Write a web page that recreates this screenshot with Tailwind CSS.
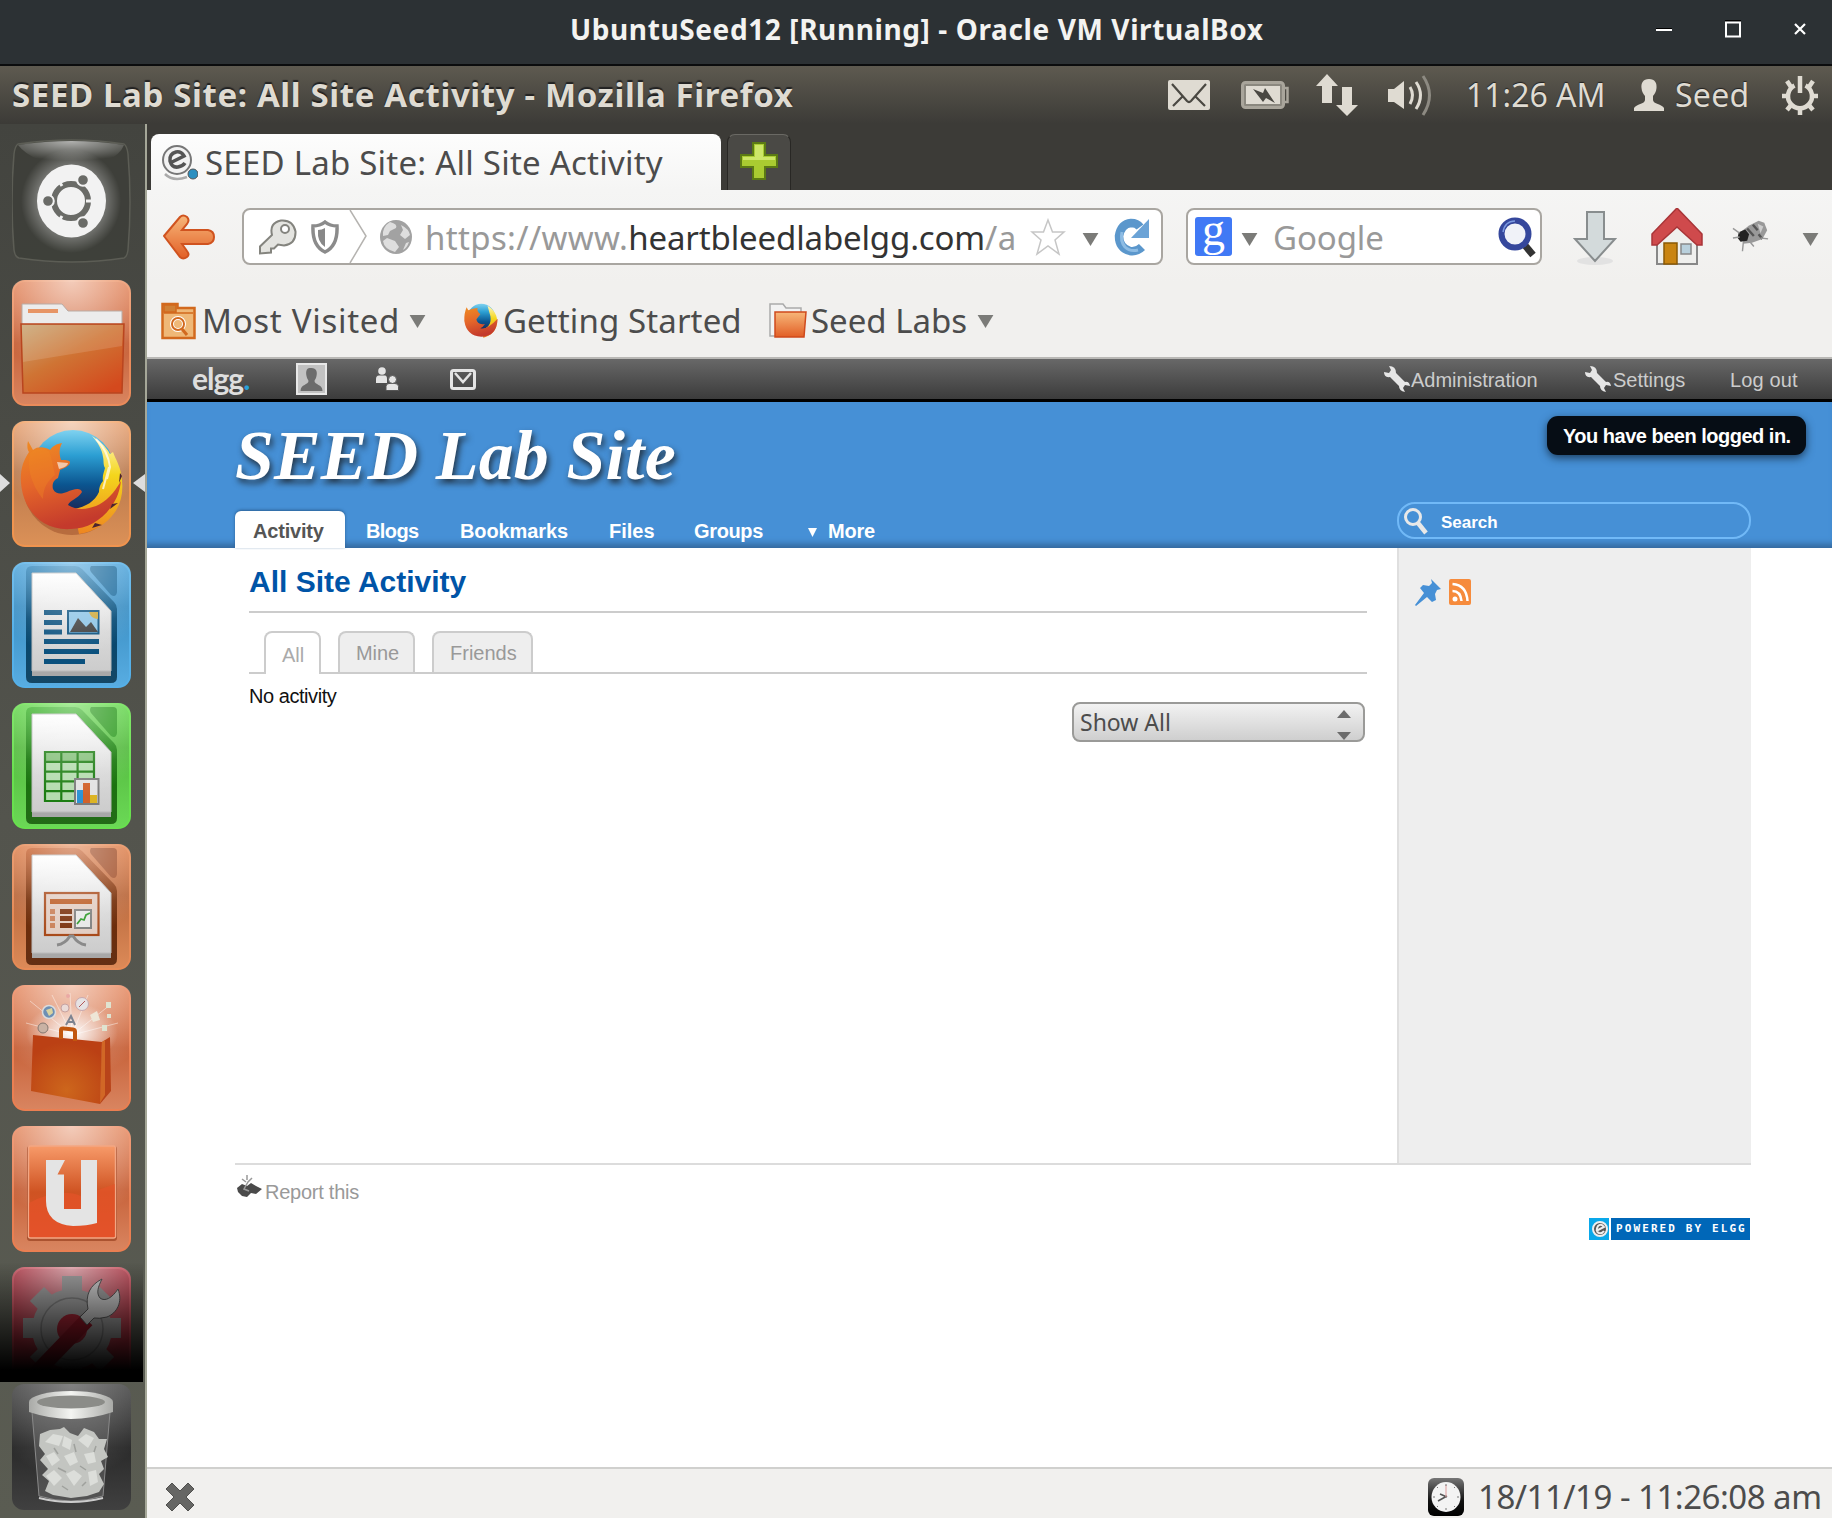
<!DOCTYPE html>
<html lang="en">
<head>
<meta charset="utf-8">
<title>SEED Lab Site: All Site Activity</title>
<script src="https://cdn.jsdelivr.net/npm/@tailwindcss/browser@4"></script>
</head>
<body class="w-[1832px] h-[1518px] overflow-hidden flex flex-col bg-white font-['Noto_Sans',sans-serif] whitespace-nowrap">

<!-- VirtualBox window title -->
<header class="h-[66px] shrink-0 bg-[#2c3134] border-b-2 border-[#0b0c0d] flex relative">
  <h1 class="ml-[570px] h-[58px] leading-[58px] text-[28px] font-bold text-[#f3f3f1] tracking-[0.6px]">UbuntuSeed12 [Running] - Oracle VM VirtualBox</h1>
  <div class="ml-auto h-[58px] flex items-center pr-[26px] gap-[53px]">
    <svg class="w-4 h-[18px]" viewBox="0 0 16 18"><path d="M0 8h16v1H0z" fill="#000"/><path d="M0 9h16v2H0z" fill="#fff"/></svg>
    <svg class="w-4 h-[18px]" viewBox="0 0 16 18"><path d="M0 0h16v1.500H0z" fill="#000"/><path d="M1 2.500h14v14H1z" fill="none" stroke="#fff" stroke-width="2"/></svg>
    <svg class="w-3 h-3" viewBox="0 0 12 12"><path d="M1 1l10 10M11 1L1 11" stroke="#fff" stroke-width="2.200"/></svg>
  </div>
</header>

<!-- Unity top panel -->
<div class="h-[58px] shrink-0 bg-linear-to-b from-[#5e5a50] to-[#3c3b37] flex items-center text-[#dfdbd2]">
  <div class="pl-3 text-[33px] font-bold tracking-[0.63px] [text-shadow:0_-2px_1px_#222]">SEED Lab Site: All Site Activity - Mozilla Firefox</div>
  <div class="ml-auto h-full flex items-center text-[32px] [text-shadow:0_-1px_1px_#222]">
    <svg class="w-[42px] h-[30px] mr-[31px]" viewBox="0 0 42 30"><rect width="42" height="30" rx="2" fill="#dfdbd2"/><path d="M4 4l15 17q2 2 4 0L38 4M5 26l10-10M37 26L27 16" fill="none" stroke="#4a4842" stroke-width="2.200"/></svg>
    <svg class="w-[48px] h-[28px] mr-[27px]" viewBox="0 0 48 28"><rect x="1.500" y="1.500" width="41" height="25" rx="3" fill="#8b887f" stroke="#a9a59b" stroke-width="3"/><path d="M43 7h3.500v14H43" fill="none" stroke="#a9a59b" stroke-width="2.500"/><rect x="5" y="5" width="34" height="18" fill="#dfdbd2"/><path d="M12 8l10 4 2-5 10 15-9-5-3 4z" fill="#4a4842"/></svg>
    <svg class="w-[42px] h-[42px] mr-[30px]" viewBox="0 0 42 42"><path d="M11 0l11 12h-6v17H6V12H0z" fill="#dfdbd2"/><path d="M31 42L20 31h6V13h10v18h6z" fill="#dfdbd2"/></svg>
    <svg class="w-[48px] h-[42px] mr-[30px]" viewBox="0 0 48 42"><path d="M0 15h6l10-8v28L6 28H0z" fill="#dfdbd2"/><path d="M22 13q5 8 0 17M28 8q9 13 0 27" fill="none" stroke="#dfdbd2" stroke-width="3"/><path d="M35 2q13 19 0 39" fill="none" stroke="#8d8a82" stroke-width="3"/></svg>
    <span class="w-[139px]">11:26 AM</span>
    <svg class="w-[30px] h-[32px] ml-[29px] mr-[11px]" viewBox="0 0 30 32"><path d="M15 0c6 0 8 4 7.500 9-.3 4-2 6-3.500 8v4c0 4 9 4 11 8v3H0v-3c2-4 11-4 11-8v-4c-1.500-2-3.200-4-3.500-8C7 4 9 0 15 0z" fill="#dfdbd2"/></svg>
    <span class="w-[75px] tracking-[0.3px]">Seed</span>
    <svg class="w-[38px] h-[40px] ml-[31px] mr-[13px]" viewBox="0 0 38 40"><g fill="none" stroke="#dfdbd2"><path d="M13.500 10.500a12 12 0 1 0 11 0" stroke-width="4.500"/><path d="M19 1v17" stroke-width="4.500"/><path d="M6 6l4 6M32 6l-4 6M1 21h7M37 21h-7M6 35l5-6M32 35l-5-6M19 40v-6" stroke-width="4.500"/></g></svg>
  </div>
</div>

<div class="flex-1 flex min-h-0">

<!-- Launcher -->
<nav class="w-[147px] shrink-0 relative bg-linear-to-b from-[#43443f] via-[#53544d] to-[#5a5c52] border-r-2 border-[#a5a798] pt-[15px] pl-3 flex flex-col gap-[15px]">
  <svg class="w-[119px] h-[126px] shrink-0" viewBox="0 0 119 126">
    <defs>
      <radialGradient id="sheen" cx=".5" cy="0" r=".75"><stop offset="0" stop-color="#fff" stop-opacity=".6"/><stop offset="1" stop-color="#fff" stop-opacity="0"/></radialGradient>
      <radialGradient id="glow"><stop offset=".6" stop-color="#fff" stop-opacity=".35"/><stop offset="1" stop-color="#fff" stop-opacity="0"/></radialGradient>
      <linearGradient id="pg" x2="0" y2="1"><stop offset="0" stop-color="#fff"/><stop offset=".6" stop-color="#d9d9d9"/><stop offset="1" stop-color="#ccc"/></linearGradient>
    </defs>
    <path d="M6 5Q60-3 112 5q3 2 4 10 4 48 0 96-1 7-4 8-52 8-105 0-4-1-5-8-4-48 0-96 1-8 4-10z" fill="#3c3d38" fill-opacity=".75" stroke="#5c5d55" stroke-width="1.500"/>
    <path d="M6 6Q60-2 112 6q-8 20-52 22Q20 24 6 6z" fill="url(#sheen)"/>
    <ellipse cx="59" cy="62" rx="50" ry="52" fill="url(#glow)"/>
    <ellipse cx="59.500" cy="62" rx="34.500" ry="36.500" fill="#f2f2f2"/>
    <circle cx="59" cy="62" r="17" fill="none" stroke="#6a6b67" stroke-width="6"/>
    <path d="M74 62h8M50 47l-5-8M50 77l-5 8" stroke="#f2f2f2" stroke-width="3"/>
    <g fill="#6a6b67" stroke="#f2f2f2" stroke-width="2"><circle cx="36" cy="62" r="5.800"/><circle cx="71" cy="41" r="5.800"/><circle cx="71" cy="84" r="5.800"/></g>
  </svg>

  <svg class="w-[119px] h-[126px] shrink-0" viewBox="0 0 119 126">
    <defs><linearGradient id="f1" x2=".8" y2="1"><stop offset="0" stop-color="#c9a878"/><stop offset=".5" stop-color="#cf7434"/><stop offset="1" stop-color="#d4491d"/></linearGradient>
    <linearGradient id="f0" x2="0" y2="1"><stop offset="0" stop-color="#e28054"/><stop offset=".5" stop-color="#c7623a"/><stop offset="1" stop-color="#d98560"/></linearGradient></defs>
    <rect x="1" y="1" width="117" height="124" rx="12" fill="url(#f0)" stroke="#ea8b5b" stroke-width="2"/><rect width="119" height="126" rx="12" fill="url(#sheen)"/>
    <path d="M10 24h40l6 7h54v14H10z" fill="#ececec" stroke="#b9aba4"/><path d="M16 29h30v4H16z" fill="#e79566"/>
    <path d="M9 44h103l-2 69H11z" fill="url(#f1)" stroke="#b9451f" stroke-width="1.500"/><path d="M10 45h101l-1 21Q60 74 11 82z" fill="#fff" fill-opacity=".13"/>
  </svg>

  <svg class="w-[119px] h-[126px] shrink-0" viewBox="0 0 119 126">
    <defs><linearGradient id="x0" x2="0" y2="1"><stop offset="0" stop-color="#e49560"/><stop offset=".4" stop-color="#b9794d"/><stop offset="1" stop-color="#dc9157"/></linearGradient>
    <linearGradient id="x1" x2="0" y2="1"><stop offset="0" stop-color="#7fd2f0"/><stop offset=".3" stop-color="#2c9fd3"/><stop offset=".65" stop-color="#0b5590"/><stop offset="1" stop-color="#1b2250"/></linearGradient>
    <linearGradient id="x2" x2=".3" y2="1"><stop offset="0" stop-color="#f08c22"/><stop offset=".5" stop-color="#e4662a"/><stop offset="1" stop-color="#c43a2c"/></linearGradient>
    <linearGradient id="x3" x2="0" y2="1"><stop offset="0" stop-color="#fff6bf"/><stop offset=".4" stop-color="#f4d61c"/><stop offset="1" stop-color="#ee8520"/></linearGradient></defs>
    <rect x="1" y="1" width="117" height="124" rx="12" fill="url(#x0)" stroke="#f0944f" stroke-width="2"/><rect width="119" height="126" rx="12" fill="url(#sheen)"/>
    <ellipse cx="60" cy="64" rx="49" ry="50" fill="#8a3b1c" fill-opacity=".4"/>
    <circle cx="61" cy="51" r="42" fill="url(#x1)"/>
    <path d="M80 15c6 4 14 10 18 18l3-2c3 8 7 14 8 22 3 14 1 28-6 38-8 12-22 20-36 22L62 88c12-2 21-8 25-17 0-4 1-8 4-11-1-5 1-9 2-13-2-3-1-7-2-11-1-8-5-14-11-21z" fill="url(#x3)"/>
    <path d="M84 18q12 12 14 28l-3 12M97 46l-6 22" fill="none" stroke="#fff" stroke-opacity=".7" stroke-width="2"/>
    <path d="M16 20l5 9c5-4 12-3 17 0 3-4 6-6 12-7-3 6-3 11-1 17 4 0 8 0 9 2 0 4-6 6-10 8l-2 8c-5 2-6 7-5 11 3 6 9 5 14 3 6-3 14-5 15 0-4 7-12 8-14 13 9 6 20 4 28 1 10-4 18-13 25-25-1 9-4 18-10 26-9 13-24 22-40 22C29 110 11 88 9 62c-1-13 2-22 8-31-2-3-2-7-1-11z" fill="url(#x2)"/>
    <path d="M45 41l11 1c0 3-5 5-9 6z" fill="#f2c6a8"/><path d="M18 32c5-5 13-5 19-2 3 8 4 16 6 24-8 6-12 14-12 24-8-10-17-26-13-46z" fill="#f08a22" fill-opacity=".35"/>
    <path d="M108 52l2 3-3 7zM106 82l-8 6 2-5zM90 104l-10 3 3-5z" fill="#4c2430"/>
  </svg>

  <svg class="w-[119px] h-[126px] shrink-0" viewBox="0 0 119 126">
    <defs><linearGradient id="w0" x2="0" y2="1"><stop offset="0" stop-color="#2f86bd"/><stop offset=".45" stop-color="#024873"/><stop offset="1" stop-color="#144765"/></linearGradient>
    <linearGradient id="w1" x2="0" y2="1"><stop offset="0" stop-color="#4fa5dc"/><stop offset=".35" stop-color="#3b8fc4"/><stop offset="1" stop-color="#58ade2"/></linearGradient></defs>
    <rect x="1" y="1" width="117" height="124" rx="12" fill="url(#w1)" stroke="#55b0e8" stroke-width="2"/>
    <path d="M20 4h43q4 0 7 3l32 33q3 3 3 7v68q0 6-6 6H20q-6 0-6-6V10q0-6 6-6z" fill="url(#w0)"/><path d="M79 4h22q4 0 4 4v22q-1 6-6 3L79 10q-2-3 0-6z" fill="#1c6c9f"/>
    <path d="M20 11h44l35 38v65H20z" fill="#a8a8a8"/><path d="M20 11h44l35 38v60H20z" fill="url(#pg)" stroke="#bbb"/>
    <path d="M32 48h18v5H32zM32 58h18v5H32zM32 67.500h18v5H32zM32 77h55v5H32zM32 87h55v5H32zM32 97h41v5H32z" fill="#0b517e"/>
    <rect x="56" y="49" width="30.500" height="22.500" fill="#8cc4e6" stroke="#0b517e" stroke-width="2"/><path d="M77 50h9v7q-7 0-9-7z" fill="#cda93a"/><path d="M58 70l8-14 8 9 5-5 7 10z" fill="#3e3e3e"/>
    <rect width="119" height="126" rx="12" fill="url(#sheen)" fill-opacity=".7"/>
  </svg>

  <svg class="w-[119px] h-[126px] shrink-0" viewBox="0 0 119 126">
    <defs><linearGradient id="c0" x2="0" y2="1"><stop offset="0" stop-color="#3bb52a"/><stop offset=".45" stop-color="#15760a"/><stop offset="1" stop-color="#236b17"/></linearGradient>
    <linearGradient id="c1" x2="0" y2="1"><stop offset="0" stop-color="#66d84f"/><stop offset=".35" stop-color="#55bb40"/><stop offset="1" stop-color="#6bd956"/></linearGradient></defs>
    <rect x="1" y="1" width="117" height="124" rx="12" fill="url(#c1)" stroke="#68e04e" stroke-width="2"/>
    <path d="M20 4h43q4 0 7 3l32 33q3 3 3 7v68q0 6-6 6H20q-6 0-6-6V10q0-6 6-6z" fill="url(#c0)"/><path d="M79 4h22q4 0 4 4v22q-1 6-6 3L79 10q-2-3 0-6z" fill="#2b9a1d"/>
    <path d="M20 11h44l35 38v65H20z" fill="#a8a8a8"/><path d="M20 11h44l35 38v60H20z" fill="url(#pg)" stroke="#bbb"/>
    <rect x="33" y="49" width="49" height="49" fill="#b4dcae"/><path d="M33 49h49v9H33z" fill="#83bf79"/>
    <path d="M33 49h49v49H33zM33 58.800h49M33 68.600h49M33 78.400h49M33 88.200h49M49.300 49v49M65.600 49v49" fill="none" stroke="#1c7d12" stroke-width="2.200"/>
    <rect x="63" y="76" width="23.500" height="25" fill="#e3e3e3" stroke="#7c7c7c" stroke-width="2"/><path d="M65 87h6v13h-6z" fill="#2d93d4"/><path d="M71 80h7v20h-7z" fill="#d2622a"/><path d="M78 92h7v8h-7z" fill="#dcb424"/>
    <rect width="119" height="126" rx="12" fill="url(#sheen)" fill-opacity=".7"/>
  </svg>

  <svg class="w-[119px] h-[126px] shrink-0" viewBox="0 0 119 126">
    <defs><linearGradient id="i0" x2="0" y2="1"><stop offset="0" stop-color="#c9622f"/><stop offset=".45" stop-color="#722c06"/><stop offset="1" stop-color="#642f14"/></linearGradient>
    <linearGradient id="i1" x2="0" y2="1"><stop offset="0" stop-color="#e0824f"/><stop offset=".4" stop-color="#bb6a3e"/><stop offset="1" stop-color="#dc8a58"/></linearGradient></defs>
    <rect x="1" y="1" width="117" height="124" rx="12" fill="url(#i1)" stroke="#e68a56" stroke-width="2"/>
    <path d="M20 4h43q4 0 7 3l32 33q3 3 3 7v68q0 6-6 6H20q-6 0-6-6V10q0-6 6-6z" fill="url(#i0)"/><path d="M79 4h22q4 0 4 4v22q-1 6-6 3L79 10q-2-3 0-6z" fill="#a3502a"/>
    <path d="M20 11h44l35 38v65H20z" fill="#a8a8a8"/><path d="M20 11h44l35 38v60H20z" fill="url(#pg)" stroke="#bbb"/>
    <rect x="33" y="49" width="53.500" height="42" fill="#e2cdc2" stroke="#a84a1a" stroke-width="2.200"/><path d="M38 55h42v5H38z" fill="#bb5a22"/>
    <path d="M38 65h5v5h-5zM38 72h5v5h-5zM38 79h5v5h-5z" fill="#c98058"/><path d="M48 65h12v5H48zM48 72h12v5H48zM48 79h12v5H48z" fill="#7a320e"/>
    <rect x="63" y="66" width="16" height="18" fill="#e8e8e8" stroke="#808080" stroke-width="2"/><path d="M65 80l4-5 3 1 2-5 4-2" fill="none" stroke="#2f9a2a" stroke-width="1.800"/>
    <path d="M45 101q8-1 13-9h3q5 8 13 9" fill="none" stroke="#8a8a8a" stroke-width="3"/>
    <rect width="119" height="126" rx="12" fill="url(#sheen)" fill-opacity=".7"/>
  </svg>

  <svg class="w-[119px] h-[126px] shrink-0" viewBox="0 0 119 126">
    <defs><radialGradient id="s0" cx=".5" cy=".8" r=".7"><stop offset="0" stop-color="#cd661c"/><stop offset="1" stop-color="#bb4014"/></radialGradient>
    <radialGradient id="s1"><stop offset="0" stop-color="#fff"/><stop offset="1" stop-color="#fff" stop-opacity="0"/></radialGradient></defs>
    <rect x="1" y="1" width="117" height="124" rx="12" fill="url(#f0)" stroke="#ea7f52" stroke-width="2"/><rect width="119" height="126" rx="12" fill="url(#sheen)"/>
    <ellipse cx="60" cy="48" rx="46" ry="30" fill="url(#s1)"/>
    <path d="M60 50L18 16M60 50L14 38M60 50L40 10M60 50L76 10M60 50L98 20M60 50L106 38M60 50L58 8" stroke="#fff" stroke-opacity=".45"/>
    <circle cx="37" cy="27" r="6.500" fill="#6d8fb4" stroke="#dcdcdc" stroke-width="1.500"/><path d="M34 25l6-2 1 5-4 3z" fill="#d9d3a0"/><circle cx="53" cy="23" r="4" fill="#eadad6" stroke="#c7a2a0"/><circle cx="70" cy="19" r="6.500" fill="#e6e2e4" stroke="#c8a8ae"/><path d="M67 22l6-6" stroke="#b35858"/><circle cx="31" cy="43" r="5" fill="#c9b2a4" stroke="#847770"/><path d="M54 40l5-9 4 9M56 37h6" stroke="#7d8390" stroke-width="2" fill="none"/><path d="M78 30l7-4 3 9-7 2z" fill="#eee6d6"/><path d="M94 17h5v6h-5zM90 40h5v6h-5zM95 29h4v4h-4z" fill="#dfe3d0"/><circle cx="56" cy="11" r="2" fill="#eaa9a4"/>
    <path d="M21 50l69 7-2 62-69-13z" fill="url(#s0)"/><path d="M90 57l8-5 1 54-11 13z" fill="#b8441a"/><path d="M90 57l3-2v55l-5 8z" fill="#d16726"/>
    <path d="M49 54V45q0-2 3-1.500l9 1q2 .3 2 2V56" fill="none" stroke="#c2560f" stroke-width="4"/>
  </svg>

  <svg class="w-[119px] h-[126px] shrink-0" viewBox="0 0 119 126">
    <defs><linearGradient id="u0" x2="0" y2="1"><stop offset="0" stop-color="#f79a69"/><stop offset=".5" stop-color="#cf5322"/><stop offset="1" stop-color="#de512a"/></linearGradient></defs>
    <rect x="1" y="1" width="117" height="124" rx="12" fill="url(#f0)" stroke="#ea7f52" stroke-width="2"/><rect width="119" height="126" rx="12" fill="url(#sheen)"/>
    <rect x="15" y="20" width="90" height="95" rx="3" fill="#8e3516" fill-opacity=".6"/>
    <rect x="16.500" y="20" width="87" height="92" rx="2" fill="url(#u0)" stroke="#f3a683" stroke-width="1.500"/>
    <path d="M17 77q30-16 52-7l34-12v53H17z" fill="#e8532a" fill-opacity=".6"/>
    <path d="M34 34h19l-7.500 14.500H52V83h17V34h16v63q-10 3-24 3-27-2-27-25z" fill="#e4e4e4"/>
  </svg>

  <div class="h-[102px] shrink-0 overflow-hidden">
  <svg class="w-[119px] h-[126px]" viewBox="0 0 119 126">
    <rect x="1" y="1" width="117" height="124" rx="12" fill="#b02c3c" stroke="#c9404f" stroke-width="2"/><rect width="119" height="126" rx="12" fill="url(#sheen)"/>
    <g stroke="#9d9d9d" stroke-width="20"><path d="M60 9v106M11 61h98M25 27l70 70M95 27l-70 70"/></g>
    <circle cx="60" cy="62" r="40" fill="#9d9d9d"/><circle cx="60" cy="62" r="31" fill="none" stroke="#7c7c7c" stroke-width="1.500"/><circle cx="60" cy="62" r="15" fill="#a32434"/>
    <path d="M75 53L22 108" stroke="#8e1524" stroke-width="15"/><path d="M68 50l8-8c-3-14 2-24 14-30-4 8-6 14-2 19 5 4 12 0 18-9 5 13-1 24-11 28q-8 2-13 1l-7 7z" fill="#c9c9c9" stroke="#555"/>
  </svg>
  </div>

  <!-- shade over the folded end of the launcher -->
  <div class="absolute left-0 top-[1138px] w-[143px] h-[120px] bg-linear-to-b from-transparent to-black to-90%"></div>

  <svg class="w-[119px] h-[126px] shrink-0 relative" viewBox="0 0 119 126">
    <defs><linearGradient id="t0" x2="0" y2="1"><stop offset="0" stop-color="#4c4c4c"/><stop offset=".5" stop-color="#2a2a2a"/><stop offset="1" stop-color="#404040"/></linearGradient>
    <linearGradient id="t1"><stop offset="0" stop-color="#a9aaa7"/><stop offset=".5" stop-color="#f4f5f2"/><stop offset="1" stop-color="#a9aaa7"/></linearGradient></defs>
    <rect width="119" height="126" rx="12" fill="url(#t0)"/><rect width="119" height="126" rx="12" fill="url(#sheen)" fill-opacity=".5"/>
    <path d="M20 28h78l-7 84q-32 10-64 0z" fill="#8a8a8a" fill-opacity=".3" stroke="#8a8a8a"/>
    <path d="M28 50l10-4 10-1 4-2 6 6 8 3 6-8 10 4 5 7 8 0-3 10 4 8-7 4 3 8-5 5 5 10-5 8-12 4-16 2-18-3-8-4 4-10-7-6 6-6-8-9 5-6-6-8z" fill="#c3c5c1"/>
    <path d="M33 58l8-8 10 2-4 10zM52 52l8 4-2 10-8-4zM66 56l8-6 8 4-6 10zM34 72l8-4 6 8-8 6zM52 72l10-4 4 10-8 4zM72 70l10-2 2 10-8 2zM34 92l8-6 8 8-8 8zM54 90l8-4 8 6-8 10zM76 88l8-2 2 12-8 4z" fill="#dcdeda"/>
    <path d="M42 64l4 6M62 60l2 8M46 84l8 4M68 82l6 4M50 102l6 4M70 102l4-4M84 62l-2 6" stroke="#9fa19d" stroke-width="1.500"/>
    <path d="M17 18v10q42 14 84 0V18z" fill="url(#t1)"/><ellipse cx="59" cy="18" rx="42" ry="11" fill="url(#t1)"/><ellipse cx="59" cy="18" rx="34" ry="6.500" fill="#8b8c88"/>
    <path d="M27 114q32 8 64 0" fill="none" stroke="#ccc" stroke-width="2"/>
  </svg>

  <svg class="absolute left-0 top-[350px] w-[10px] h-[18px]" viewBox="0 0 10 18"><path d="M0 0l10 9-10 9z" fill="#ddd"/></svg>
  <svg class="absolute left-[133px] top-[350px] w-[12px] h-[18px]" viewBox="0 0 12 18"><path d="M12 0L0 9l12 9z" fill="#ddd"/></svg>
</nav>

<!-- Firefox -->
<main class="flex-1 flex flex-col min-w-0">

  <div class="h-[66px] shrink-0 bg-[#3c3b37] flex items-end pl-1">
    <div class="w-[570px] h-[56px] bg-linear-to-b from-[#fdfdfd] to-[#f5f5f4] rounded-t-lg flex items-center pl-[10px] pt-px text-[33px] text-[#4c4c4c] tracking-[0.23px]">
      <svg class="w-[37px] h-[36px] mr-[7px]" viewBox="0 0 37 36"><circle cx="16" cy="15" r="14" fill="#f2f2f2" stroke="#777" stroke-width="2"/><path d="M9 18l14-7q-3-5-8-4-7 2-6 9 2 7 8 6 5-1 7-4" fill="none" stroke="#555" stroke-width="3.500"/><path d="M4 29q8 8 22 3" stroke="#aaa" stroke-width="2.500" fill="none"/><circle cx="32" cy="29" r="5" fill="#2b8fc0" stroke="#555" stroke-width="1"/></svg>
      <span>SEED Lab Site: All Site Activity</span>
    </div>
    <div class="ml-[6px] w-[64px] h-[56px] rounded-t-lg border border-b-0 border-[#282724] bg-[#4a4945] border-t-[#6a6964] flex justify-center pt-[6px]">
      <svg class="w-[38px] h-[40px]" viewBox="0 0 38 40"><path d="M13 2h12v12h12v12H25v12H13V26H1V14h12z" fill="#a9cb31" stroke="#5b7a14" stroke-width="2"/><path d="M15 4h8v12h12v3H3v-3h12z" fill="#cde668"/></svg>
    </div>
  </div>

  <div class="h-[93px] shrink-0 bg-linear-to-b from-[#f5f5f4] to-[#f1f0ee] flex items-center text-[33px]">
    <svg class="ml-[16px] w-[52px] h-[46px]" viewBox="0 0 52 46"><defs><linearGradient id="ba" x2="0" y2="1"><stop offset="0" stop-color="#f7b77a"/><stop offset="1" stop-color="#e25f26"/></linearGradient></defs><path d="M1 22L17 3q3-3 7 0 3 3 0 7l-5 6h26q6 1 6 7t-6 7H19l5 7q3 4 0 6-4 3-7 0z" fill="url(#ba)" stroke="#d0531f" stroke-width="2"/></svg>
    <div class="ml-[27px] w-[921px] h-[57px] rounded-lg border-2 border-[#a9a6a1] bg-white flex items-center text-[#999] pl-[15px]">
      <svg class="w-[38px] h-[36px]" viewBox="0 0 38 36"><path d="M13 16Q10 4 22 1.500q12-1 14.500 11Q37 25 25 26.500l-6-1-4 4h-3v4l-11 1v-7z" fill="#e4e4e0" stroke="#84847e" stroke-width="2"/><circle cx="26" cy="10" r="4" fill="#fff" stroke="#84847e" stroke-width="2"/></svg>
      <svg class="ml-[14px] w-[28px] h-[34px]" viewBox="0 0 28 34"><path d="M14 2q5 4 12 4 1 20-12 26Q1 26 2 6q7 0 12-4z" fill="#fff" stroke="#8b8b8b" stroke-width="3.500"/><path d="M14 8v19Q6 22 7 10q4 0 7-2z" fill="#888"/></svg>
      <svg class="ml-[10px] w-[18px] h-[53px]" viewBox="0 0 18 53"><path d="M1 0l16 26L1 53" fill="none" stroke="#b5b3b0" stroke-width="1.500"/></svg>
      <svg class="ml-[13px] w-[32px] h-[34px]" viewBox="0 0 32 34"><ellipse cx="16" cy="17" rx="16" ry="17" fill="#a2a2a2"/><path d="M10 2q8 2 6 6l-6 3-2 4-5 1q-1-9 7-14zM21 5q8 4 9 10l-5 4-5-4 3-5zM7 18l8 3 4 6-4 5Q4 29 3 21zM26 23l3-1q-2 6-6 8z" fill="#dedede"/></svg>
      <div class="ml-[13px] w-[592px] pt-0.5 overflow-hidden tracking-[0.35px]">https://www.<span class="text-[#333] tracking-[-0.15px]">heartbleedlabelgg.com</span>/a</div>
      <svg class="ml-[13px] w-[36px] h-[38px]" viewBox="0 0 36 38"><path d="M18 2l4.500 12H34l-9 8 4 14-11-8-11 8 4-14-9-8h11.500z" fill="#fff" stroke="#c6c6c6" stroke-width="1.500"/></svg>
      <svg class="ml-[16px] mt-[6px] w-[17px] h-[13px]" viewBox="0 0 17 14"><path d="M0 0h17L8.500 14z" fill="#7b7b78"/></svg>
      <svg class="ml-[15px] w-[36px] h-[38px]" viewBox="0 0 36 38"><path d="M28 29q-5 5-12 4Q5 30 5 18 7 6 17 5q6 0 9 4" fill="none" stroke="#5b97cc" stroke-width="8.500"/><path d="M35 1v19H17z" fill="#6ba3d6"/><path d="M24 32q-8 2-13-3Q6 23 8 14" fill="none" stroke="#8dbce4" stroke-width="3"/></svg>
    </div>
    <div class="ml-[23px] w-[356px] h-[57px] rounded-lg border-2 border-[#a9a6a1] bg-white flex items-center text-[#999] pl-[7px]">
      <div class="w-[37px] h-[39px] bg-[#4079f5] rounded-[3px] text-white font-['Liberation_Serif',serif] text-[46px] leading-[26px] text-center">g</div>
      <svg class="ml-[9px] mt-[6px] w-[17px] h-[13px]" viewBox="0 0 17 14"><path d="M0 0h17L8.500 14z" fill="#7b7b78"/></svg>
      <span class="ml-[15px] pt-0.5 tracking-[-0.1px]">Google</span>
      <svg class="ml-auto mr-[3px] w-[40px] h-[42px]" viewBox="0 0 40 42"><path d="M26 27l10 12" stroke="#333" stroke-width="7"/><circle cx="18" cy="18" r="13.500" fill="#f0f2f8" stroke="#35479c" stroke-width="6"/><path d="M6 16q2-11 12-11" stroke="#7c9ae0" stroke-width="1.500" fill="none"/></svg>
    </div>
    <svg class="ml-[31px] w-[44px] h-[56px]" viewBox="0 0 44 56"><ellipse cx="22" cy="52" rx="18" ry="4" fill="#e2e2e2"/><path d="M14 3h17v27h11L22 52 2 30h12z" fill="#d3dadb" stroke="#888d8e" stroke-width="2"/></svg>
    <svg class="ml-[34px] w-[52px] h-[58px]" viewBox="0 0 52 58"><path d="M6 30L26 12l20 18v26H6z" fill="#efefed" stroke="#888" stroke-width="2"/><path d="M26 0l25 26v11h-5L26 19 6 37H1V26z" fill="#cf4a4c" stroke="#a93538" stroke-width="1.500"/><path d="M13 35h13v21H13z" fill="#c98412" stroke="#8a5906" stroke-width="1.500"/><path d="M30 36h10v10H30z" fill="#b9d0dc" stroke="#888" stroke-width="1.500"/></svg>
    <svg class="ml-[29px] w-[38px] h-[34px]" viewBox="0 0 40 34"><path d="M10 11l8-6 10-5 6 2 3 8-5 9-11 4-9 1z" fill="#999"/><path d="M7 12l7-3 4 5-2 7-7 1-3-4z" fill="#222"/><path d="M22 4l5 6M16 8l7 8M28 14l4 5" stroke="#555" stroke-width="2.500"/><path d="M1 8l7 5M1 18l7-1M12 22l-1 10M18 21l5 6M30 18l8 1" stroke="#999" stroke-width="1.500"/><path d="M27 3l6 3-3 7z" fill="#ccc"/></svg>
    <svg class="ml-[32px] mt-[6px] w-[17px] h-[13px]" viewBox="0 0 17 14"><path d="M0 0h17L8.500 14z" fill="#7b7b78"/></svg>
  </div>

  <div class="h-[76px] shrink-0 bg-[#f1f0ee] border-b-2 border-[#b9b8b5] flex items-center pt-0.5 text-[33px] text-[#4c4c4c]">
    <svg class="ml-[14px] w-[35px] h-[38px]" viewBox="0 0 35 38"><path d="M1.500 2h15v4h17v30h-32z" fill="#efb877" stroke="#d2691e" stroke-width="2.500"/><path d="M3 11h29M3 3h12v7H3z" fill="#d08136" stroke="#d2691e" stroke-width="1.500"/><circle cx="17" cy="22" r="6" fill="none" stroke="#fff" stroke-width="4"/><circle cx="17" cy="22" r="6" fill="none" stroke="#d2691e" stroke-width="2"/><path d="M21 27l5 6" stroke="#d2691e" stroke-width="3"/></svg>
    <span class="ml-[6px] w-[197px] tracking-[0.7px]">Most Visited</span>
    <svg class="ml-[10px] w-[17px] h-[13px]" viewBox="0 0 17 14"><path d="M0 0h17L8.500 14z" fill="#7b7b78"/></svg>
    <svg class="ml-[38px] w-[34px] h-[36px]" viewBox="8 8 104 108"><circle cx="61" cy="51" r="42" fill="url(#x1)"/><path d="M80 15c20 12 32 30 29 55-4 25-22 40-42 43L62 88c20-4 30-18 27-40z" fill="url(#x3)"/><path d="M16 20l5 9q12-6 29-7-5 8 8 19l-12 16q2 18 26 14-6 10-14 13 20 6 53-29-3 55-50 55Q16 108 9 62q-1-24 7-42z" fill="url(#x2)"/></svg>
    <span class="ml-[5px] w-[237px] tracking-[0.1px]">Getting Started</span>
    <svg class="ml-[29px] w-[38px] h-[36px]" viewBox="0 0 38 36"><path d="M1 1h13l3 4h15v28H1z" fill="#f2f2f2" stroke="#aaa" stroke-width="1.500"/><path d="M6 9h31l-2 25H6z" fill="url(#ba)" stroke="#cf4a1d" stroke-width="1.500"/></svg>
    <span class="ml-[4px] w-[156px]">Seed Labs</span>
    <svg class="ml-[10px] w-[17px] h-[13px]" viewBox="0 0 17 14"><path d="M0 0h17L8.500 14z" fill="#7b7b78"/></svg>
  </div>

  <!-- Elgg page -->
  <div class="flex-1 min-h-0 flex flex-col font-['Liberation_Sans',sans-serif] relative">
    <div class="h-[43px] shrink-0 bg-linear-to-b from-[#686868] to-[#3c3c3c] border-b-3 border-black flex items-center text-[20px] text-[#ccc]">
      <span class="ml-[45px] w-[59px] text-[30px] leading-[38px] pb-0.5 font-bold font-['Lato',sans-serif] text-[#dedede] tracking-[-1px]">elgg<span class="text-[#2aa0d8]">.</span></span>
      <svg class="ml-[45px] w-[31px] h-[32px]" viewBox="0 0 31 32"><rect x="1" y="1" width="29" height="30" fill="#c2c2c2" stroke="#e8e8e8" stroke-width="2"/><path d="M15.500 5c5 0 6 4 5 8-.5 3-2 4-2 5 0 4 8 3 8 10h-22c0-7 8-6 8-10 0-1-1.500-2-2-5-1-4 0-8 3-8z" fill="#6c6c6c"/></svg>
      <svg class="ml-[48px] w-[24px] h-[24px]" viewBox="0 0 24 24"><g fill="#e4e4e4"><circle cx="7" cy="4" r="3.800"/><path d="M1 16v-4q0-3.500 3-3.500h6q2 0 2 3.500v4z"/><g stroke="#555" stroke-width="1"><path d="M11 23.500v-4q0-3 3-3h6q3.500 0 3.500 3v4z"/><circle cx="17.500" cy="12.500" r="4"/></g></g></svg>
      <svg class="ml-[51px] w-[26px] h-[21px]" viewBox="0 0 26 21"><rect x="1.500" y="1.500" width="23" height="18" rx="2" fill="none" stroke="#e4e4e4" stroke-width="3"/><path d="M5 4l8 9 8-9" fill="none" stroke="#e4e4e4" stroke-width="2.500"/></svg>
      <svg class="ml-auto w-[26px] h-[26px]" viewBox="0 0 26 26"><path d="M0 6l5 1 2-3-2-4q7 0 7 7l9 9q4-1 5 4l-5-1-2 3 2 4q-6-1-6-6l-9-9Q0 12 0 6z" fill="#e6e6e6"/></svg>
      <span class="ml-[1px] w-[126px] pt-0.5">Administration</span>
      <svg class="ml-[48px] w-[26px] h-[26px]" viewBox="0 0 26 26"><path d="M0 6l5 1 2-3-2-4q7 0 7 7l9 9q4-1 5 4l-5-1-2 3 2 4q-6-1-6-6l-9-9Q0 12 0 6z" fill="#e6e6e6"/></svg>
      <span class="ml-[2px] w-[72px] pt-0.5">Settings</span>
      <span class="ml-[45px] mr-[34px] w-[68px] pt-0.5 tracking-[0.15px]">Log out</span>
    </div>

    <div class="h-[146px] shrink-0 bg-[#4690d6] shadow-[inset_0_-8px_6px_-4px_#35689c] pl-[88px] pr-[81px] flex flex-col justify-between">
      <div class="pt-[16px] leading-[76px] text-[70px] font-bold italic text-white font-['Liberation_Serif',serif] tracking-[0.1px] [text-shadow:2px_4px_6px_#234]">SEED Lab Site</div>
      <div class="flex items-end text-[20px] font-bold text-white h-[46px]">
        <div class="w-[110px] h-[37px] rounded-t-md bg-white text-[#555] pl-[18px] leading-[40px] tracking-[-0.2px] shadow-[0_-1px_3px_#2b5f93]">Activity</div>
        <div class="h-[37px] leading-[40px] flex">
          <span class="ml-[21px] w-[51px] tracking-[-0.6px]">Blogs</span>
          <span class="ml-[43px] w-[107px] tracking-[-0.1px]">Bookmarks</span>
          <span class="ml-[42px] w-[42px]">Files</span>
          <span class="ml-[43px] w-[68px] tracking-[-0.35px]">Groups</span>
          <svg class="ml-[46px] mt-[17px] w-[9px] h-[9px]" viewBox="0 0 10 10"><path d="M0 0h10L5 10z" fill="#fff"/></svg>
          <span class="ml-[11px] tracking-[-0.2px]">More</span>
        </div>
        <div class="ml-auto mb-[9px] w-[354px] h-[37px] rounded-[18px] border-2 border-[#71b9f7] flex items-center text-[17px] pl-[4px]">
          <svg class="w-[26px] h-[28px]" viewBox="0 0 26 28"><circle cx="10" cy="10" r="7.500" fill="none" stroke="#e8e8e8" stroke-width="3"/><path d="M15 16l8 10" stroke="#e8e8e8" stroke-width="4.500"/></svg>
          <span class="ml-[12px] mt-[5px]">Search</span>
        </div>
      </div>
    </div>

    <div class="ml-[88px] w-[1516px] h-[617px] shrink-0 border-b-2 border-[#dcdcdc] flex">
      <section class="w-[1162px] pl-[14px] pr-[30px] pt-[14px]">
        <h2 class="h-[51px] border-b-2 border-[#ccc] leading-[39px] text-[30px] font-bold text-[#0054a7]">All Site Activity</h2>
        <div class="mt-[18px] h-[43px] border-b-2 border-[#ccc] pl-[15px] flex items-start gap-[17px] text-[20px] text-[#999]">
          <div class="w-[57px] h-[43px] border-2 border-b-0 border-[#ccc] rounded-t-lg bg-white pl-[16px] leading-[44px] text-[#aaa]">All</div>
          <div class="w-[77px] h-[41px] border-2 border-b-0 border-[#ccc] rounded-t-lg bg-[#eee] pl-[16px] leading-[40px] tracking-[-0.1px]">Mine</div>
          <div class="w-[101px] h-[41px] border-2 border-b-0 border-[#ccc] rounded-t-lg bg-[#eee] pl-[16px] leading-[40px]">Friends</div>
        </div>
        <div class="flex">
          <p class="pt-[7px] leading-[30px] text-[20px] text-[#111] tracking-[-0.45px]">No activity</p>
          <div class="ml-auto mr-[2px] mt-[28px] w-[293px] h-[40px] rounded-lg border-2 border-[#9a9a98] bg-linear-to-b from-[#f2f2f2] to-[#cfcfcf] flex items-center justify-between pl-[6px] pr-[12px] font-['Noto_Sans',sans-serif] text-[23px] text-[#4c4c4c]">
            <span>Show All</span>
            <svg class="w-[14px] h-[31px] mt-[5px]" viewBox="0 0 14 31"><path d="M0 9h14L7 1zM0 23h14l-7 8z" fill="#6c6c6c"/></svg>
          </div>
        </div>
      </section>
      <aside class="w-[354px] bg-[#eee] border-l-2 border-[#dfdfdf] pt-[31px] pl-[16px] flex items-start">
        <svg class="w-[27px] h-[28px]" viewBox="0 0 27 28"><path d="M16 0l10 10-4 1-2 4 1 6-4 2-5-5L1 27l-1-1 9-12-4-5 3-3 6 1 3-3z" fill="#4690d6"/></svg>
        <svg class="ml-[7px] w-[22px] h-[26px]" viewBox="0 0 22 26"><rect width="22" height="26" rx="2" fill="#f68b3c"/><circle cx="6" cy="20" r="2.500" fill="#fff"/><path d="M3.500 12q8 0 9 10M3.500 5q14 1 15 17" fill="none" stroke="#fff" stroke-width="2.500"/></svg>
      </aside>
    </div>

    <footer class="ml-[88px] w-[1516px] flex items-start text-[20px] text-[#999]">
      <svg class="mt-[10px] ml-[2px] w-[25px] h-[24px]" viewBox="0 0 25 24"><path d="M0 13l5-4 5 2 4-3 5 3 6 3-6 5-5-1-4 4-5-1-4-4z" fill="#4a4a4a"/><path d="M5 4l4 3M10 0v5M15 3l-4 4-4 7 5 2" stroke="#999" stroke-width="1.500" fill="none"/></svg>
      <span class="ml-[3px] mt-[12px] leading-[30px] tracking-[-0.25px]">Report this</span>
      <div class="ml-auto mt-[53px] mr-[1px] w-[161px] h-[22px] bg-[#0067b8] flex items-center text-white">
        <svg class="w-[22px] h-[22px]" viewBox="0 0 22 22"><rect width="20" height="22" fill="#0aa8ea"/><rect x="20" width="2" height="22" fill="#fff"/><circle cx="11" cy="11" r="7" fill="#555" stroke="#eee" stroke-width="2"/><path d="M7 13l8-4q-3-4-6-1-3 5 1 7 3 1 5-2" fill="none" stroke="#eee" stroke-width="2"/></svg>
        <span class="ml-[5px] text-[11px] font-bold font-['DejaVu_Sans_Mono',monospace] tracking-[2.1px]">POWERED BY ELGG</span>
      </div>
    </footer>

    <!-- system message -->
    <div class="absolute left-[1400px] top-[57px] w-[259px] h-[39px] rounded-[11px] bg-[#060d15] shadow-[0_3px_8px_#1d3f61] pl-[16px] leading-[40px] text-[20px] font-bold text-white tracking-[-0.5px]">You have been logged in.</div>
  </div>

  <div class="h-[51px] shrink-0 bg-[#f1f0ee] border-t-2 border-[#d0d0ce] flex items-center pt-1.5 text-[33px] text-[#4c4c4c]">
    <svg class="ml-[18px] w-[30px] h-[32px]" viewBox="0 0 30 32"><path d="M7 2l8 8 8-8 6 6-8 8 8 8-6 6-8-8-8 8-6-6 8-8-8-8z" fill="#666664" stroke="#50504e"/></svg>
    <svg class="ml-auto w-[36px] h-[38px]" viewBox="0 0 36 38"><defs><linearGradient id="ck" x2="0" y2="1"><stop offset="0" stop-color="#777"/><stop offset=".6" stop-color="#111"/><stop offset="1" stop-color="#000"/></linearGradient></defs><rect width="36" height="38" rx="6" fill="url(#ck)"/><ellipse cx="18" cy="19" rx="14.500" ry="15" fill="#f3f3f3"/><path d="M19 19l-7-3M19 18l-9 5" stroke="#555" stroke-width="1.500"/><path d="M18 7v12" stroke="#d99"/><path d="M18 6v2M18 30v2M5 19h2M29 19h2M9 9l1 1M27 9l-1 1M9 29l1-1M27 29l-1-1" stroke="#777"/></svg>
    <span class="ml-[14px] mr-[11px] w-[343px] tracking-[-0.5px]">18/11/19 - 11:26:08 am</span>
  </div>
</main>
</div>
</body>
</html>
